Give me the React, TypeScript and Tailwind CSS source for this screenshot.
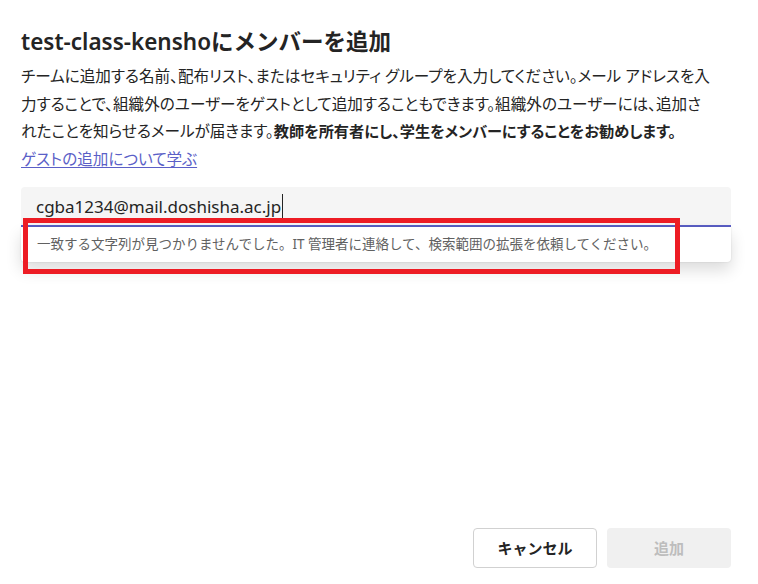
import React from 'react';

const font = "font-['Segoe_UI','Noto_Sans','Noto_Sans_CJK_JP',sans-serif]";

function App() {
  return (
    <main
      className={`${font} flex h-[584px] w-[758px] flex-col bg-white pl-[21px] pr-[27px] pt-[28px] text-[#242424]`}
    >
      <h1 className="text-[22.5px] font-semibold leading-[28px]">
        test-class-kenshoにメンバーを追加
      </h1>

      <p className="mt-[7px] whitespace-nowrap text-[15.6px] leading-[27.5px] [font-feature-settings:'palt']">
        チームに追加する名前、配布リスト、またはセキュリティ グループを入力してください。メール アドレスを入
        <br />
        力することで、組織外のユーザーをゲストとして追加することもできます。組織外のユーザーには、追加さ
        <br />
        れたことを知らせるメールが届きます。
        <span className="text-[15.2px] font-bold">教師を所有者にし、学生をメンバーにすることをお勧めします。</span>
        <br />
        <a href="#" className="text-[#5b5fc7] underline underline-offset-2">
          ゲストの追加について学ぶ
        </a>
      </p>

      <div className="relative mt-[14px]">
        <div className="flex h-[40px] items-center rounded-t-[4px] border-b-2 border-[#5b5fc7] bg-[#f5f5f5] pl-[15px]">
          <span className="text-[17px] leading-none">cgba1234@mail.doshisha.ac.jp</span>
          <span className="ml-[1px] h-[25px] w-px bg-[#242424]" />
        </div>
        <div className="flex h-[35px] items-center rounded-b-[4px] bg-white pl-[16px] shadow-[0_0_2px_rgba(0,0,0,0.12),0_8px_16px_rgba(0,0,0,0.14)]">
          <span className="text-[13.5px] text-[#616161]">
            一致する文字列が見つかりませんでした。IT 管理者に連絡して、検索範囲の拡張を依頼してください。
          </span>
        </div>

        <div className="pointer-events-none absolute left-[2px] top-[31px] h-[56px] w-[657px] border-[5px] border-[#ed1c24]" />
      </div>

      <div className="mt-auto mb-[16px] flex justify-end gap-[10px]">
        <button className="h-[40px] w-[124px] rounded-[4px] border border-[#d1d1d1] bg-white text-[15px] font-bold text-[#242424]">
          キャンセル
        </button>
        <button
          disabled
          className="h-[40px] w-[124px] rounded-[4px] bg-[#f0f0f0] text-[15px] font-bold text-[#bdbdbd]"
        >
          追加
        </button>
      </div>
    </main>
  );
}

export default App;
